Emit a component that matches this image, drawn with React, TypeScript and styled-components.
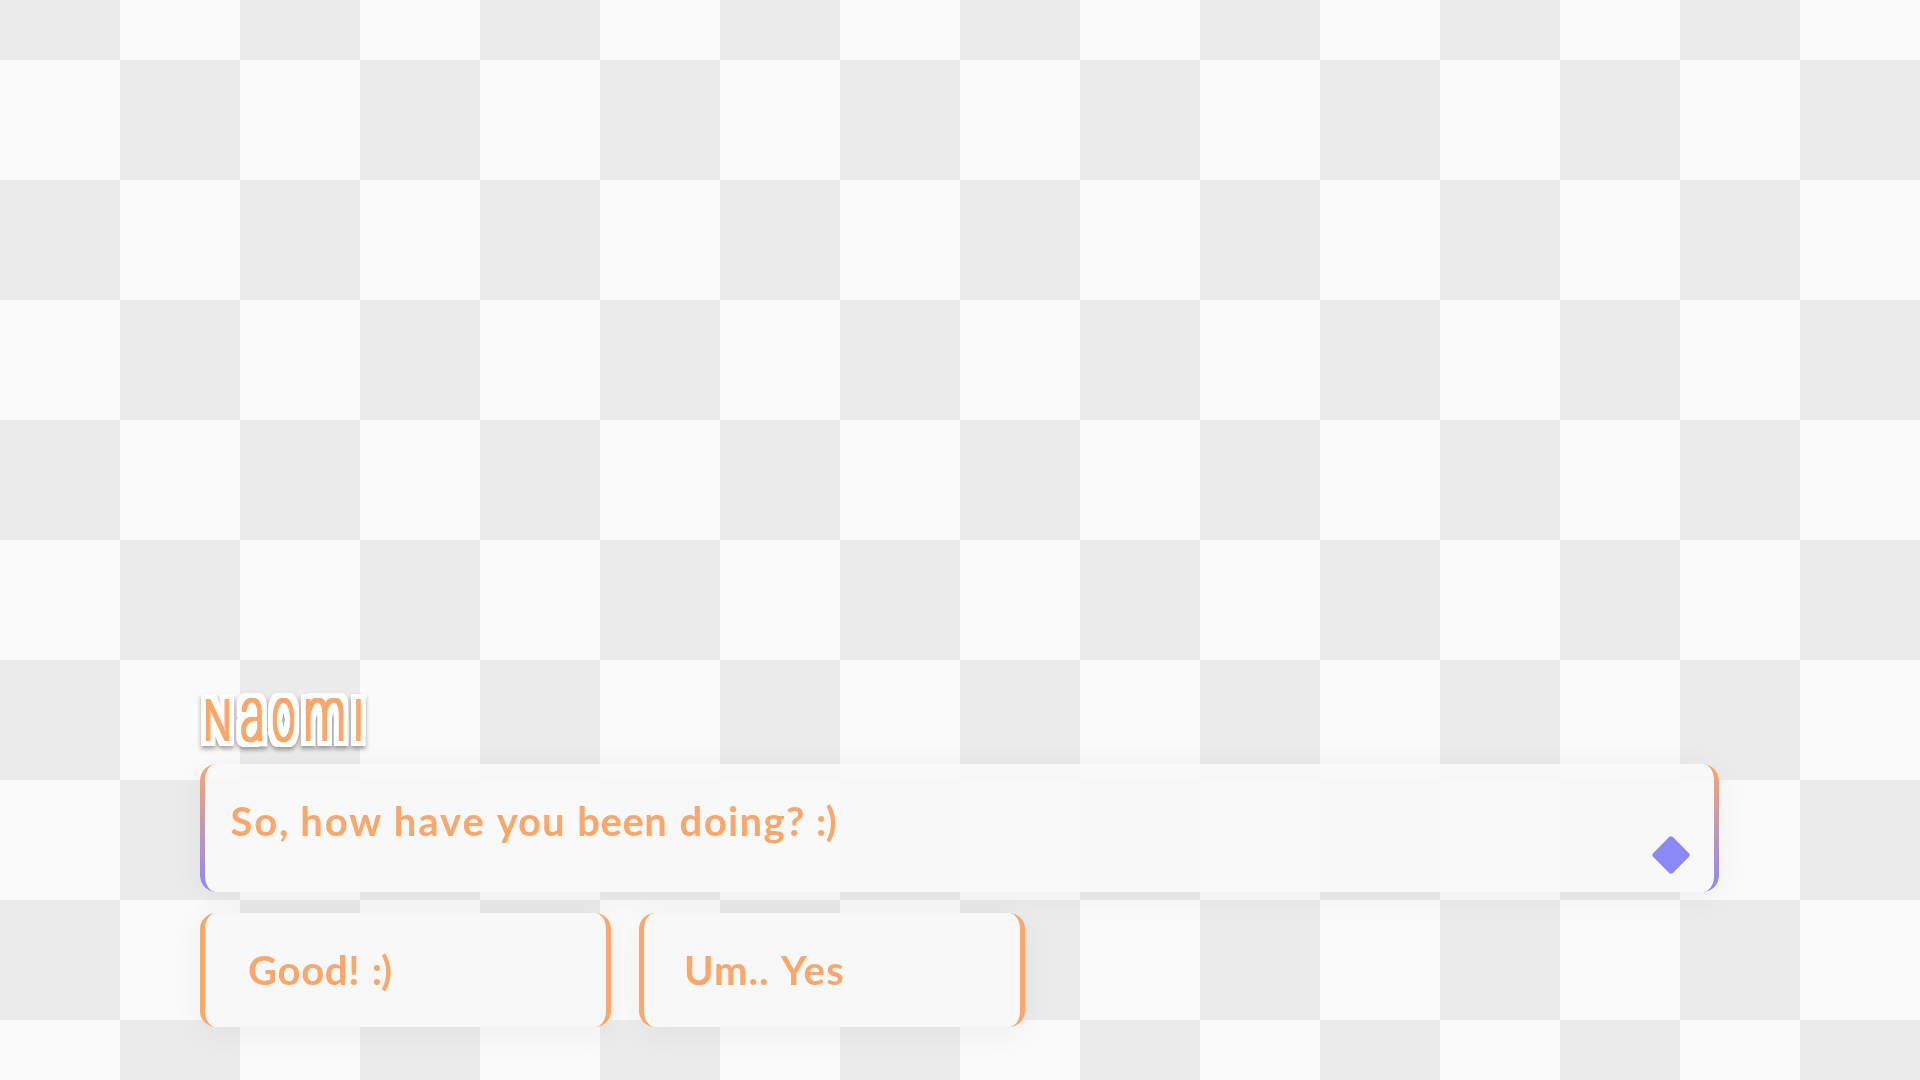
import React from "react";
import styled, { createGlobalStyle } from "styled-components";

const ORANGE = "#fba66a";
const VIOLET = "#8b89f8";

const GlobalStyle = createGlobalStyle`
  *, *::before, *::after { box-sizing: border-box; }
  body { margin: 0; overflow: hidden; }
`;

const Stage = styled.main`
  display: flex;
  flex-direction: column;
  width: 1920px;
  height: 1080px;
  padding: 686px 201px 53px 200px;
  font-family: Lato, "Open Sans", sans-serif;
  color: ${ORANGE};
  background: conic-gradient(#fafafa 25%, #ebebeb 0 50%, #fafafa 0 75%, #ebebeb 0) 0 -60px / 240px 240px;
`;

const FilterDefs = styled.svg`
  display: block;
  width: 0;
  height: 0;
  flex: none;
`;

const Speaker = styled.h1`
  display: flex;
  align-items: flex-start;
  height: 78px;
  margin: 0;
  padding: 14px 0 0 6px;
  font: 100 40px/42px Roboto, sans-serif;
  filter: url(#name-outline);
`;

const Letter = styled.span<{ $w: number }>`
  display: block;
  width: ${(p) => p.$w}px;
  height: 42px;
`;

const Glyph = styled.span<{
  $size: number;
  $x: number;
  $y: number;
  $dx: number;
  $dy?: number;
  $bold: number;
  $caps?: boolean;
}>`
  display: block;
  width: max-content;
  margin-left: ${(p) => p.$dx}px;
  margin-top: ${(p) => p.$dy ?? 0}px;
  font-size: ${(p) => p.$size}px;
  line-height: 42px;
  text-transform: ${(p) => (p.$caps ? "uppercase" : "none")};
  text-shadow: ${(p) => `${p.$bold}px 0 currentColor, ${-p.$bold}px 0 currentColor`};
  transform: scale(${(p) => p.$x}, ${(p) => p.$y});
  transform-origin: 0 ${(p) => (p.$caps ? 36 : 34)}px;
`;

const Panel = styled.div`
  position: relative;
  border-radius: 16px;
  box-shadow: 0 5px 30px rgba(0, 0, 0, 0.05);
`;

const Dialogue = styled(Panel)`
  display: flex;
  justify-content: space-between;
  height: 128px;
  padding: 32px 34.5px 23px 30.5px;
  background: rgba(249, 249, 249, 0.94);

  &::before {
    content: "";
    position: absolute;
    inset: 0;
    border: solid transparent;
    border-width: 0 5px;
    border-radius: inherit;
    background: linear-gradient(${ORANGE}, ${VIOLET}) border-box;
    mask: linear-gradient(#000 0 0) padding-box exclude, linear-gradient(#000 0 0) border-box;
  }
`;

const Line = styled.p`
  margin: 0;
  font-size: 40px;
  font-weight: 700;
  line-height: 50px;
  white-space: pre;
`;

const Word = styled.span<{ $ls: number; $gap?: number }>`
  margin-right: ${(p) => p.$gap ?? 0}px;
  letter-spacing: ${(p) => p.$ls}px;
`;

const NextMark = styled.span`
  align-self: flex-end;
  width: 28px;
  height: 28px;
  border-radius: 3px;
  background: ${VIOLET};
  transform: rotate(45deg);
`;

const Choices = styled.div`
  display: flex;
  gap: 28px;
  margin-top: 21px;
`;

const Choice = styled(Panel).attrs({ as: "button" })<{ $w: number; $pad: number }>`
  width: ${(p) => p.$w}px;
  height: 114px;
  padding: 0 0 0 ${(p) => p.$pad}px;
  border: solid ${ORANGE};
  border-width: 0 5px;
  background: #f8f8f8;
  color: inherit;
  font-family: inherit;
  text-align: left;
`;

const name = [
  { char: "N", w: 35, size: 57, x: 0.67, y: 0.98, dx: -2, bold: 1.3, caps: true },
  { char: "a", w: 32, size: 40, x: 1.08, y: 1.9, dx: -0.5, dy: 6, bold: 0.6 },
  { char: "o", w: 33, size: 40, x: 1, y: 1.9, dx: -0.5, dy: 6, bold: 0.6 },
  { char: "m", w: 50, size: 40, x: 1.15, y: 1.9, dx: -2, dy: 6, bold: 0.6 },
  { char: "i", w: 10, size: 57, x: 1, y: 0.98, dx: -5, bold: 0.6, caps: true },
];

const words = [
  { text: "So, ", ls: 1.8, gap: -1.4 },
  { text: "how ", ls: 1.9, gap: -0.4 },
  { text: "have ", ls: 2, gap: -1 },
  { text: "you ", ls: 1, gap: 1 },
  { text: "been ", ls: 0.5, gap: 2 },
  { text: "doing? ", ls: 1.4, gap: -1 },
  { text: ":)", ls: -0.5 },
];

export default function App() {
  return (
    <>
      <GlobalStyle />
      <Stage>
        <FilterDefs aria-hidden="true">
          <filter id="name-outline" x="-5%" y="-20%" width="110%" height="140%" colorInterpolationFilters="sRGB">
            <feMorphology in="SourceGraphic" operator="dilate" radius="1" result="ink" />
            <feMorphology in="ink" operator="dilate" radius="5" result="fat" />
            <feFlood floodColor="#fff" />
            <feComposite in2="fat" operator="in" result="outline" />
            <feDropShadow in="outline" dx="0" dy="3" stdDeviation="2" floodColor="#000" floodOpacity="0.35" result="back" />
            <feMerge>
              <feMergeNode in="back" />
              <feMergeNode in="ink" />
            </feMerge>
          </filter>
        </FilterDefs>
        <Speaker>
          {name.map((l) => (
            <Letter key={l.char} $w={l.w}>
              <Glyph $size={l.size} $x={l.x} $y={l.y} $dx={l.dx} $dy={l.dy} $bold={l.bold} $caps={l.caps}>
                {l.char}
              </Glyph>
            </Letter>
          ))}
        </Speaker>
        <Dialogue>
          <Line>
            {words.map((w) => (
              <Word key={w.text} $ls={w.ls} $gap={w.gap}>{w.text}</Word>
            ))}
          </Line>
          <NextMark />
        </Dialogue>
        <Choices>
          <Choice $w={411} $pad={43}>
            <Line as="span">
              <Word $ls={0.7} $gap={1}>{"Good! "}</Word>
              <Word $ls={-1}>:)</Word>
            </Line>
          </Choice>
          <Choice $w={386} $pad={40}>
            <Line as="span">
              <Word $ls={1} $gap={0.5}>{"Um.. "}</Word>
              <Word $ls={1.4}>Yes</Word>
            </Line>
          </Choice>
        </Choices>
      </Stage>
    </>
  );
}
